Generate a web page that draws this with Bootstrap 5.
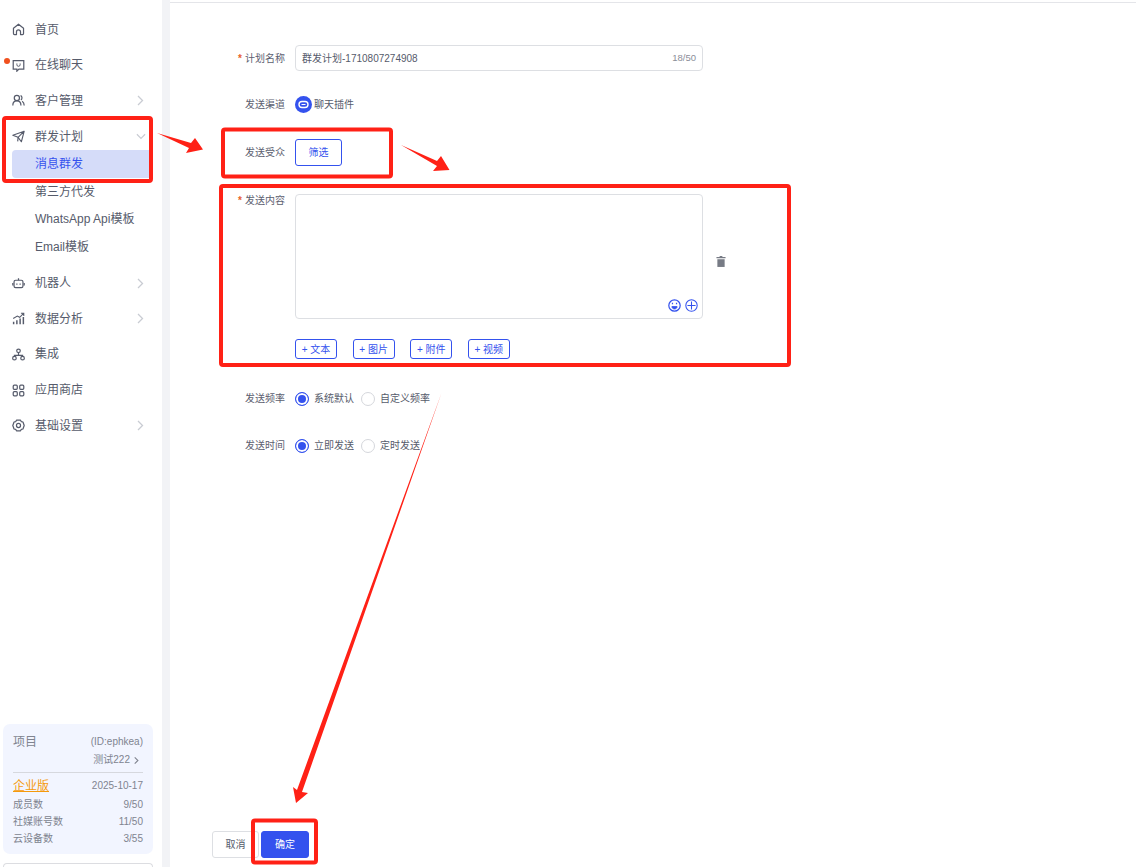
<!DOCTYPE html>
<html lang="zh">
<head>
  <meta charset="UTF-8" />
  <title>群发计划</title>
  <link href="https://cdn.jsdelivr.net/npm/bootstrap@5.3.0/dist/css/bootstrap.min.css" rel="stylesheet" />
  <style>
    html,body{height:867px;overflow:hidden}
    body{font-family:"Liberation Sans","Noto Sans CJK SC",sans-serif;color:#565b6b;background:#fff;position:relative}
    .app-side{width:162px;height:867px;flex:none;padding-top:11.7px}
    .app-gutter{width:8px;flex:none;background:#f2f3f6}
    .app-main{height:865px;border-top:1px solid #e4e5e9;margin-top:2px}
    .side-item{height:35.7px;flex:none;padding-left:12px;padding-right:18px;font-size:12px;position:relative;color:#565b6b}
    .side-item svg.ico{width:13px;height:13px;margin-right:10px;flex:none}
    .side-chev{width:7px;height:11px;margin-left:auto}
    .side-down{width:10px;height:7px;margin-left:auto;margin-right:-2px}
    .side-sub{height:27.5px;flex:none;padding-left:35px;font-size:12px;color:#565b6b}
    .side-sub-last{margin-bottom:4.8px}
    .side-active{height:28px;flex:none;margin-top:-4.5px;margin-left:12px;margin-right:10px;padding-left:23px;background:#d5dcf9;color:#3452ee;border-radius:4px 0 0 4px;font-size:12px}
    .side-dot{position:absolute;left:4px;top:11px;width:6px;height:6px;border-radius:50%;background:#f0501e}
    .plan-box{margin:auto 9px 0 3px;height:130px;flex:none;border-radius:7px;background:#f2f5ff;padding:9px 10px 0;font-size:10px;color:#80848f}
    .plan-rule{border-top:1px solid #d6d8de;margin:3px 0}
    .plan-name{font-size:12px;line-height:18px}
    .plan-id{font-size:10px}
    .plan-orange{color:#f59a0c;font-size:12px;text-decoration:underline}
    .plan-line{line-height:17px}
    .plan-next{margin:9px 9px 0 3px;height:4px;flex:none;border:1px solid #dcdde1;border-bottom:0;border-radius:4px 4px 0 0}
    .form-area{padding-top:42px;padding-left:42px}
    .form-line{font-size:10px}
    .form-key{width:73px;flex:none;text-align:right;margin-right:10px;color:#5c6070}
    .form-key-top{margin-top:-1px}
    .form-key i{color:#e8622a;font-style:normal;font-weight:700;margin-right:3px}
    .name-box{width:408px;height:26px;border:1px solid #dddfe3;border-radius:4px;padding:0 6px;color:#565b6b}
    .name-count{color:#8b8e98;font-size:9.5px;margin-left:auto}
    .chan-mark{width:17px;height:17px;margin-right:2px;flex:none}
    .btn-pick{width:47px;height:27px;border:1px solid #3452ee;border-radius:3px;color:#3452ee;background:#fff;font-size:10px;padding:0}
    .content-box{width:408px;height:125px;border:1px solid #dddfe3;border-radius:4px;position:relative}
    .content-tools{position:absolute;right:4px;bottom:6px}
    .content-tools svg{width:13px;height:13px;display:block}
    .trash-ico{width:10px;height:11px;margin-left:13px;margin-top:62px;flex:none}
    .btn-add{height:20px;width:42px;border:1px solid #3452ee;border-radius:3px;color:#3452ee;background:#fff;font-size:10px;padding:0;white-space:nowrap}
    .add-row{gap:15.6px;margin-left:83px;margin-top:20px}
    .radio-mark.form-check-input{width:14px;height:14px;margin:0;border:1px solid #d5d7dc;background-image:none!important;flex:none}
    .radio-mark.form-check-input:checked{background-color:#3452ee;border-color:#3452ee;box-shadow:inset 0 0 0 2px #fff}
    .radio-label{margin:0 7px 0 5px}
    .foot-btns{margin-top:auto;padding-left:42px;padding-bottom:9px;gap:2px}
    .btn-cancel,.btn-ok{width:47px;height:27px;font-size:10px;padding:0;border-radius:3px}
    .btn-cancel{background:#fff;border:1px solid #dddfe3;color:#565b6b}
    .btn-ok{background:#3452ee;border:1px solid #3452ee;color:#fff;width:48px}
    .mark-layer{position:absolute;left:0;top:0;width:1136px;height:867px;pointer-events:none}
  </style>
</head>
<body>
<div class="d-flex">
  <aside class="app-side d-flex flex-column">
    <div class="side-item d-flex align-items-center">
      <svg class="ico" viewBox="0 0 16 16" fill="none" stroke="#565b6b" stroke-width="1.500" stroke-linejoin="round"><path d="M1.800 6.500 8 1.500l6.200 5V13a1.300 1.300 0 0 1-1.300 1.300H10.500V11a2.500 2.500 0 0 0-5 0v3.300H3.100A1.300 1.300 0 0 1 1.800 13z"/></svg>首页</div>
    <div class="side-item d-flex align-items-center"><span class="side-dot"></span>
      <svg class="ico" viewBox="0 0 16 16" fill="none" stroke="#565b6b" stroke-width="1.500"><path d="M1.500 2h13v10.500H8.500L6 15v-2.500H1.500z"/><path d="M6 5.500v1.500a2 2 0 0 0 4 0V5.500" stroke-width="1.200"/></svg>在线聊天</div>
    <div class="side-item d-flex align-items-center">
      <svg class="ico" viewBox="0 0 16 16" fill="none" stroke="#565b6b" stroke-width="1.500"><circle cx="6" cy="5" r="3.200"/><path d="M1 14c0-3.500 2-5.500 5-5.500s5 2 5 5.500M10.500 2c2 .5 2.500 4 .5 5.500M12.500 9c1.500 1 2.500 3 2.500 5"/></svg>客户管理
      <svg class="side-chev" viewBox="0 0 7 11" fill="none" stroke="#c9ccd3" stroke-width="1.300"><path d="m1 1 4.500 4.500L1 10"/></svg></div>
    <div class="side-item d-flex align-items-center">
      <svg class="ico" viewBox="0 0 16 16" fill="none" stroke="#565b6b" stroke-width="1.400" stroke-linejoin="round"><path d="M1 6.500 15 1.500 11.500 14.500 7.500 9zM7.500 9 15 1.500"/><path d="M7.500 9 7 14"/></svg>群发计划
      <svg class="side-down" viewBox="0 0 11 7" fill="none" stroke="#c9ccd3" stroke-width="1.300"><path d="m1 1 4.500 4.500L10 1"/></svg></div>
    <div class="side-active d-flex align-items-center">消息群发</div>
    <div class="side-sub d-flex align-items-center">第三方代发</div>
    <div class="side-sub d-flex align-items-center">WhatsApp Api模板</div>
    <div class="side-sub side-sub-last d-flex align-items-center">Email模板</div>
    <div class="side-item d-flex align-items-center">
      <svg class="ico" viewBox="0 0 16 16" fill="none" stroke="#565b6b" stroke-width="1.500"><rect x="2.500" y="4" width="11" height="9" rx="2"/><path d="M8 1.500V4M1 7.500v3M15 7.500v3M6 8v1.500M10 8v1.500"/></svg>机器人
      <svg class="side-chev" viewBox="0 0 7 11" fill="none" stroke="#c9ccd3" stroke-width="1.300"><path d="m1 1 4.500 4.500L1 10"/></svg></div>
    <div class="side-item d-flex align-items-center">
      <svg class="ico" viewBox="0 0 16 16" fill="none" stroke="#565b6b" stroke-width="1.800"><path d="M2 15v-3M6 15v-5M10 15V8M14 15V6"/><path stroke-width="1.300" d="m1.500 8 5-3 3 1.500 5-5M11 1.500h3.500V5"/></svg>数据分析
      <svg class="side-chev" viewBox="0 0 7 11" fill="none" stroke="#c9ccd3" stroke-width="1.300"><path d="m1 1 4.500 4.500L1 10"/></svg></div>
    <div class="side-item d-flex align-items-center">
      <svg class="ico" viewBox="0 0 16 16" fill="none" stroke="#565b6b" stroke-width="1.500"><circle cx="8" cy="3.500" r="2.200"/><circle cx="3" cy="12.500" r="2.200"/><circle cx="13" cy="12.500" r="2.200"/><path d="M8 6v3M3 10V9h10v1"/></svg>集成</div>
    <div class="side-item d-flex align-items-center">
      <svg class="ico" viewBox="0 0 16 16" fill="none" stroke="#565b6b" stroke-width="1.500"><rect x="1.500" y="1.500" width="5" height="5" rx="1.200"/><rect x="9.500" y="1.500" width="5" height="5" rx="1.200"/><rect x="1.500" y="9.500" width="5" height="5" rx="1.200"/><rect x="9.500" y="9.500" width="5" height="5" rx="1.200"/></svg>应用商店</div>
    <div class="side-item d-flex align-items-center">
      <svg class="ico" viewBox="0 0 16 16" fill="none" stroke="#565b6b" stroke-width="1.500" stroke-linejoin="round"><path d="M5.500 1.500h5l1 1.800 2 .4 1.500 4.300-1.500 4.300-2 .4-1 1.800h-5l-1-1.800-2-.4L1 8l1.500-4.300 2-.4z"/><circle cx="8" cy="8" r="2.500"/></svg>基础设置
      <svg class="side-chev" viewBox="0 0 7 11" fill="none" stroke="#c9ccd3" stroke-width="1.300"><path d="m1 1 4.500 4.500L1 10"/></svg></div>

    <div class="plan-box">
      <div class="d-flex justify-content-between align-items-center plan-name"><span>项目</span><span class="plan-id">(ID:ephkea)</span></div>
      <div class="d-flex justify-content-end align-items-center" style="line-height:18px">测试222
        <svg class="ms-1 me-1" width="5" height="9" viewBox="0 0 7 11" fill="none" stroke="#80848f" stroke-width="1.500"><path d="m1 1 4.500 4.500L1 10"/></svg></div>
      <div class="plan-rule"></div>
      <div class="d-flex justify-content-between align-items-center" style="line-height:20px"><span class="plan-orange">企业版</span><span>2025-10-17</span></div>
      <div class="d-flex justify-content-between plan-line"><span>成员数</span><span>9/50</span></div>
      <div class="d-flex justify-content-between plan-line"><span>社媒账号数</span><span>11/50</span></div>
      <div class="d-flex justify-content-between plan-line"><span>云设备数</span><span>3/55</span></div>
    </div>
    <div class="plan-next"></div>
  </aside>
  <div class="app-gutter"></div>
  <main class="app-main flex-grow-1 d-flex flex-column">
    <div class="form-area">
      <div class="form-line d-flex align-items-center">
        <div class="form-key"><i>*</i>计划名称</div>
        <div class="name-box d-flex align-items-center">群发计划-1710807274908<span class="name-count">18/50</span></div>
      </div>
      <div class="form-line d-flex align-items-center" style="margin-top:25px">
        <div class="form-key">发送渠道</div>
        <svg class="chan-mark" viewBox="0 0 17 17"><circle cx="8.500" cy="8.500" r="8.500" fill="#3452ee"/><rect x="4" y="5.500" width="9" height="6" rx="3" fill="none" stroke="#fff" stroke-width="1.400"/><path d="M6.500 8.500h4" stroke="#fff"/></svg>
        <span>聊天插件</span>
      </div>
      <div class="form-line d-flex align-items-center" style="margin-top:26px">
        <div class="form-key">发送受众</div>
        <button type="button" class="btn btn-pick">筛选</button>
      </div>
      <div class="form-line d-flex align-items-start" style="margin-top:28px">
        <div class="form-key form-key-top"><i>*</i>发送内容</div>
        <div class="content-box">
          <div class="content-tools d-flex gap-1">
            <svg viewBox="0 0 16 16" fill="none" stroke="#3452ee" stroke-width="1.500"><circle cx="8" cy="8" r="7"/><path d="M5.500 4.500v2M10.500 4.500v2"/><path d="M4.800 9.300h6.400c0 1.800-1.400 3-3.200 3s-3.200-1.200-3.200-3z" fill="#3452ee" stroke-width="1"/></svg>
            <svg viewBox="0 0 16 16" fill="none" stroke="#3452ee" stroke-width="1.300"><circle cx="8" cy="8" r="7"/><path d="M8 3v10M3 8h10"/></svg>
          </div>
        </div>
        <svg class="trash-ico" viewBox="0 0 11 12" fill="#777b85"><path d="M4 0h3v1h3.500v1.500H.5V1H4z"/><path d="M1.500 3.500h8V12h-8z"/></svg>
      </div>
      <div class="d-flex add-row">
        <button type="button" class="btn btn-add">+ 文本</button>
        <button type="button" class="btn btn-add">+ 图片</button>
        <button type="button" class="btn btn-add">+ 附件</button>
        <button type="button" class="btn btn-add">+ 视频</button>
      </div>
      <div class="form-line d-flex align-items-center" style="margin-top:32px">
        <div class="form-key">发送频率</div>
        <input class="form-check-input radio-mark" type="radio" name="freq" checked>
        <span class="radio-label">系统默认</span>
        <input class="form-check-input radio-mark" type="radio" name="freq">
        <span class="radio-label">自定义频率</span>
      </div>
      <div class="form-line d-flex align-items-center" style="margin-top:32px">
        <div class="form-key">发送时间</div>
        <input class="form-check-input radio-mark" type="radio" name="when" checked>
        <span class="radio-label">立即发送</span>
        <input class="form-check-input radio-mark" type="radio" name="when">
        <span class="radio-label">定时发送</span>
      </div>
    </div>
    <div class="foot-btns d-flex">
      <button type="button" class="btn btn-cancel">取消</button>
      <button type="button" class="btn btn-ok">确定</button>
    </div>
  </main>
</div>

<!-- annotations drawn over the page -->
<svg class="mark-layer" viewBox="0 0 1136 867">
  <g fill="none" stroke="#ff2116" stroke-width="4">
    <rect x="4" y="118" width="147" height="63" rx="2"/>
    <rect x="223" y="129.500" width="168" height="47" rx="2"/>
    <rect x="221" y="186" width="568" height="179" rx="2"/>
    <rect x="253" y="820.500" width="63" height="42" rx="2"/>
  </g>
  <g fill="#ff2116">
    <path d="M157 133 191 143 195 138 203 149.500 186 153 189 148z"/>
    <path d="M401 145 437 161 441 156 449.500 170 433 171 437 166z"/>
    <path d="M441.500 393 302 792 308 793 296 803 293 787 297 790z"/>
  </g>
</svg>
<script src="https://cdn.jsdelivr.net/npm/bootstrap@5.3.0/dist/js/bootstrap.bundle.min.js"></script>
</body>
</html>
